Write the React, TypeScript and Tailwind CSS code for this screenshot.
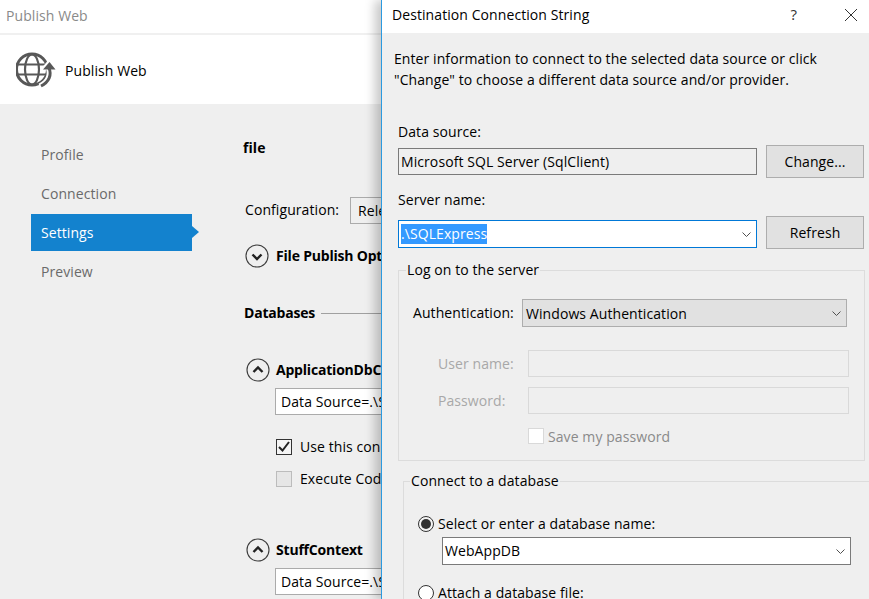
import React from "react";

function Chevron() {
  return (
    <svg width="9" height="5" viewBox="0 0 9 5" fill="none" stroke="#505050" strokeWidth="1" className="shrink-0">
      <path d="M0.5 0.5 L4.5 4.5 L8.5 0.5" />
    </svg>
  );
}

function RoundToggle({ up }: { up?: boolean }) {
  return (
    <svg width="24" height="24" viewBox="0 0 24 24" fill="none" className="shrink-0">
      <circle cx="12" cy="12" r="11" stroke="#3c3c3c" strokeWidth="1.1" />
      <path d={up ? "M7.5 14 L12 9.5 L16.5 14" : "M7.5 10.5 L12 15 L16.5 10.5"} stroke="#222" strokeWidth="2.4" />
    </svg>
  );
}

function GlobeIcon() {
  return (
    <svg width="42" height="38" viewBox="0 0 42 38" fill="none" stroke="#585858" className="shrink-0 blur-[0.4px]">
      <circle cx="16" cy="18.5" r="15.5" strokeWidth="3" />
      <ellipse cx="16" cy="18.5" rx="7" ry="15" strokeWidth="2.2" />
      <path d="M2 13.5 H30 M2 23.5 H30" strokeWidth="2.2" />
      <path d="M33 16 C36 24 33 32 24 36" stroke="#fff" strokeWidth="7" />
      <path d="M34 7 L24 19 H41 Z" fill="#fff" stroke="none" />
      <path d="M33 17 C36 24 33 31 25 35" strokeWidth="3" />
      <path d="M33.5 11 L27 18.5 H39.5 Z" fill="#585858" stroke="none" />
    </svg>
  );
}

function NavItem({ label, active }: { label: string; active?: boolean }) {
  return (
    <div className="relative h-[37px] w-[161px]">
      <div className={`flex h-full items-center pl-[10px] text-[14px] ${active ? "bg-[#1382ce] text-white" : "text-[#6a6a6a]"}`}>
        {label}
      </div>
      {active && (
        <div className="absolute left-full top-[12px] h-0 w-0 border-y-[6.5px] border-l-[7px] border-y-transparent border-l-[#1382ce]" />
      )}
    </div>
  );
}

function DbHead({ name }: { name: string }) {
  return (
    <div className="flex items-center gap-[6px] pl-[3px]">
      <RoundToggle up />
      <span className="whitespace-nowrap text-[14px] font-bold leading-[20px] tracking-[-0.2px] text-black">{name}</span>
    </div>
  );
}

function ConnBox() {
  return (
    <div className="ml-[32px] mt-[6px] flex h-[27px] w-[300px] items-center whitespace-nowrap border border-[#ababab] bg-white pl-[5px] text-[14px] text-black">
      Data Source=.\SQLExpress;Initial Catalog=WebAppDB
    </div>
  );
}

function Btn({ label }: { label: string }) {
  return (
    <div className="flex h-[33px] w-[98px] shrink-0 items-center justify-center border border-[#adadad] bg-[#e1e1e1] text-[14px] text-black">
      {label}
    </div>
  );
}

function Main() {
  return (
    <div className="flex h-full w-[381px] flex-col overflow-hidden bg-white">
      <div className="flex h-[35px] shrink-0 items-center border-b-2 border-[#f0f0f0] pb-[3px] pl-[6px] text-[14px] text-[#8a8a8a]">
        Publish Web
      </div>
      <div className="flex h-[69px] shrink-0 items-center gap-[7px] bg-white pl-[16px] pt-[1px] text-[14px] text-black">
        <GlobeIcon />
        <span>Publish Web</span>
      </div>
      <div className="flex flex-1 bg-[#efefef]">
        <div className="flex w-[243px] shrink-0 flex-col gap-[2px] pl-[31px] pt-[32px]">
          <NavItem label="Profile" />
          <NavItem label="Connection" />
          <NavItem label="Settings" active />
          <NavItem label="Preview" />
        </div>
        <div className="min-w-0 flex-1 pt-[34px]">
          <div className="text-[14px] font-bold leading-[20px] text-black">file</div>
          <div className="mt-[39px] flex items-center pl-[2px]">
            <span className="w-[105px] shrink-0 pb-[2px] text-[14px] text-black">Configuration:</span>
            <div className="flex h-[27px] w-[300px] shrink-0 items-center border border-[#ababab] bg-[#efefef] pl-[7px] text-[14px] text-black">Release</div>
          </div>
          <div className="mt-[20px] flex items-center gap-[7px] pl-[2px]">
            <RoundToggle />
            <span className="whitespace-nowrap text-[14px] font-bold leading-[20px] tracking-[-0.2px] text-black">File Publish Options</span>
          </div>
          <div className="mt-[35px] flex items-center gap-[6px] pl-[1px]">
            <span className="text-[14px] font-bold leading-[20px] tracking-[-0.2px] text-black">Databases</span>
            <div className="h-px flex-1 bg-[#a0a0a0]" />
          </div>
          <div className="mt-[35px]"><DbHead name="ApplicationDbContext" /></div>
          <ConnBox />
          <div className="ml-[33px] mt-[21px] flex items-center gap-[8px]">
            <div className="flex h-[16px] w-[16px] shrink-0 items-center justify-center border border-[#333] bg-[#f4f4f4]">
              <svg width="12" height="11" viewBox="0 0 12 11" fill="none" stroke="#222" strokeWidth="2"><path d="M1 6 L4.5 9.5 L11 1" /></svg>
            </div>
            <span className="whitespace-nowrap text-[14px] text-black">Use this connection string at runtime</span>
          </div>
          <div className="ml-[33px] mt-[11px] flex items-center gap-[8px]">
            <div className="h-[16px] w-[16px] shrink-0 border border-[#bcbcbc] bg-[#e6e6e6]" />
            <span className="whitespace-nowrap text-[14px] text-black">Execute Code First Migrations</span>
          </div>
          <div className="mt-[49px]"><DbHead name="StuffContext" /></div>
          <ConnBox />
        </div>
      </div>
    </div>
  );
}

function Dialog() {
  return (
    <div className="absolute bottom-0 left-[381px] top-0 flex w-[488px] flex-col overflow-hidden border-l border-[#2b9ae0] bg-[#efefef] text-[14px] text-black shadow-[-6px_0_10px_rgba(0,0,0,0.22)]">
      <div className="flex h-[33px] shrink-0 items-center justify-between bg-white pb-[4px] pl-[10px] pr-[11px]">
        <span>Destination Connection String</span>
        <div className="flex items-center gap-[47px]">
          <span className="text-[15px] text-[#333]">?</span>
          <svg width="14" height="14" viewBox="0 0 14 14" fill="none" stroke="#333" strokeWidth="1"><path d="M1 1 L13 13 M13 1 L1 13" /></svg>
        </div>
      </div>
      <div className="pl-[16px]">
        <p className="-ml-[4px] mt-[15px] text-[14px] leading-[21px]">
          Enter information to connect to the selected data source or click<br />
          "Change" to choose a different data source and/or provider.
        </p>
        <div className="mt-[32px] leading-[20px]">Data source:</div>
        <div className="mt-[3px] flex items-center gap-[9px]">
          <div className="flex h-[27px] w-[359px] shrink-0 items-center border border-[#7a7a7a] bg-[#efefef] pl-[2px]">Microsoft SQL Server (SqlClient)</div>
          <Btn label="Change..." />
        </div>
        <div className="mt-[12px] leading-[20px]">Server name:</div>
        <div className="mt-[6px] flex items-start gap-[9px]">
          <div className="mt-[4px] flex h-[28px] w-[359px] shrink-0 items-center justify-between border border-[#0078d7] bg-white pl-[2px] pr-[5px]">
            <span className="bg-[#3399ff] leading-[20px] text-white">.\SQLExpress</span>
            <Chevron />
          </div>
          <Btn label="Refresh" />
        </div>
        <fieldset className="mt-[11px] h-[201px] w-[467px] border border-[#dcdcdc] pl-[14px]">
          <legend className="-ml-[7px] px-px leading-[20px]">Log on to the server</legend>
          <div className="mt-[19px] flex items-center gap-[8px]">
            <span className="w-[101px] shrink-0 pb-[2px]">Authentication:</span>
            <div className="flex h-[28px] w-[325px] shrink-0 items-center justify-between border border-[#adadad] bg-[#e1e1e1] pl-[3px] pr-[5px]">
              <span>Windows Authentication</span>
              <Chevron />
            </div>
          </div>
          <div className="mt-[23px] flex items-center pl-[25px] text-[#a8a8a8]">
            <span className="w-[90px] shrink-0">User name:</span>
            <div className="h-[27px] w-[321px] shrink-0 border border-[#d9d9d9]" />
          </div>
          <div className="mt-[10px] flex items-center pl-[25px] text-[#a8a8a8]">
            <span className="w-[90px] shrink-0">Password:</span>
            <div className="h-[27px] w-[321px] shrink-0 border border-[#d9d9d9]" />
          </div>
          <div className="ml-[115px] mt-[14px] flex h-[16px] items-center gap-[4px] text-[#8a8a8a]">
            <div className="h-[16px] w-[16px] shrink-0 border border-[#d9d9d9] bg-white" />
            <span>Save my password</span>
          </div>
        </fieldset>
        <fieldset className="ml-[5px] mt-[10px] h-[200px] w-[470px] border border-[#dcdcdc] pl-[14px]">
          <legend className="-ml-[8px] px-px leading-[20px]">Connect to a database</legend>
          <div className="mt-[23px] flex items-center gap-[4px]">
            <div className="flex h-[16px] w-[16px] shrink-0 items-center justify-center rounded-full border border-[#333] bg-[#f4f4f4]">
              <div className="h-[10px] w-[10px] rounded-full bg-[#333]" />
            </div>
            <span className="leading-[20px]">Select or enter a database name:</span>
          </div>
          <div className="ml-[24px] mt-[3px] flex h-[28px] w-[409px] items-center justify-between border border-[#7a7a7a] bg-white pl-[2px] pr-[5px]">
            <span className="pb-[2px]">WebAppDB</span>
            <Chevron />
          </div>
          <div className="mt-[18px] flex items-center gap-[4px]">
            <div className="h-[16px] w-[16px] shrink-0 rounded-full border border-[#333] bg-white" />
            <span className="leading-[20px]">Attach a database file:</span>
          </div>
        </fieldset>
      </div>
    </div>
  );
}

export default function App() {
  return (
    <div className="relative h-[599px] w-[869px] overflow-hidden bg-white font-['Open_Sans',sans-serif] tracking-[0.08px]">
      <Main />
      <Dialog />
    </div>
  );
}
